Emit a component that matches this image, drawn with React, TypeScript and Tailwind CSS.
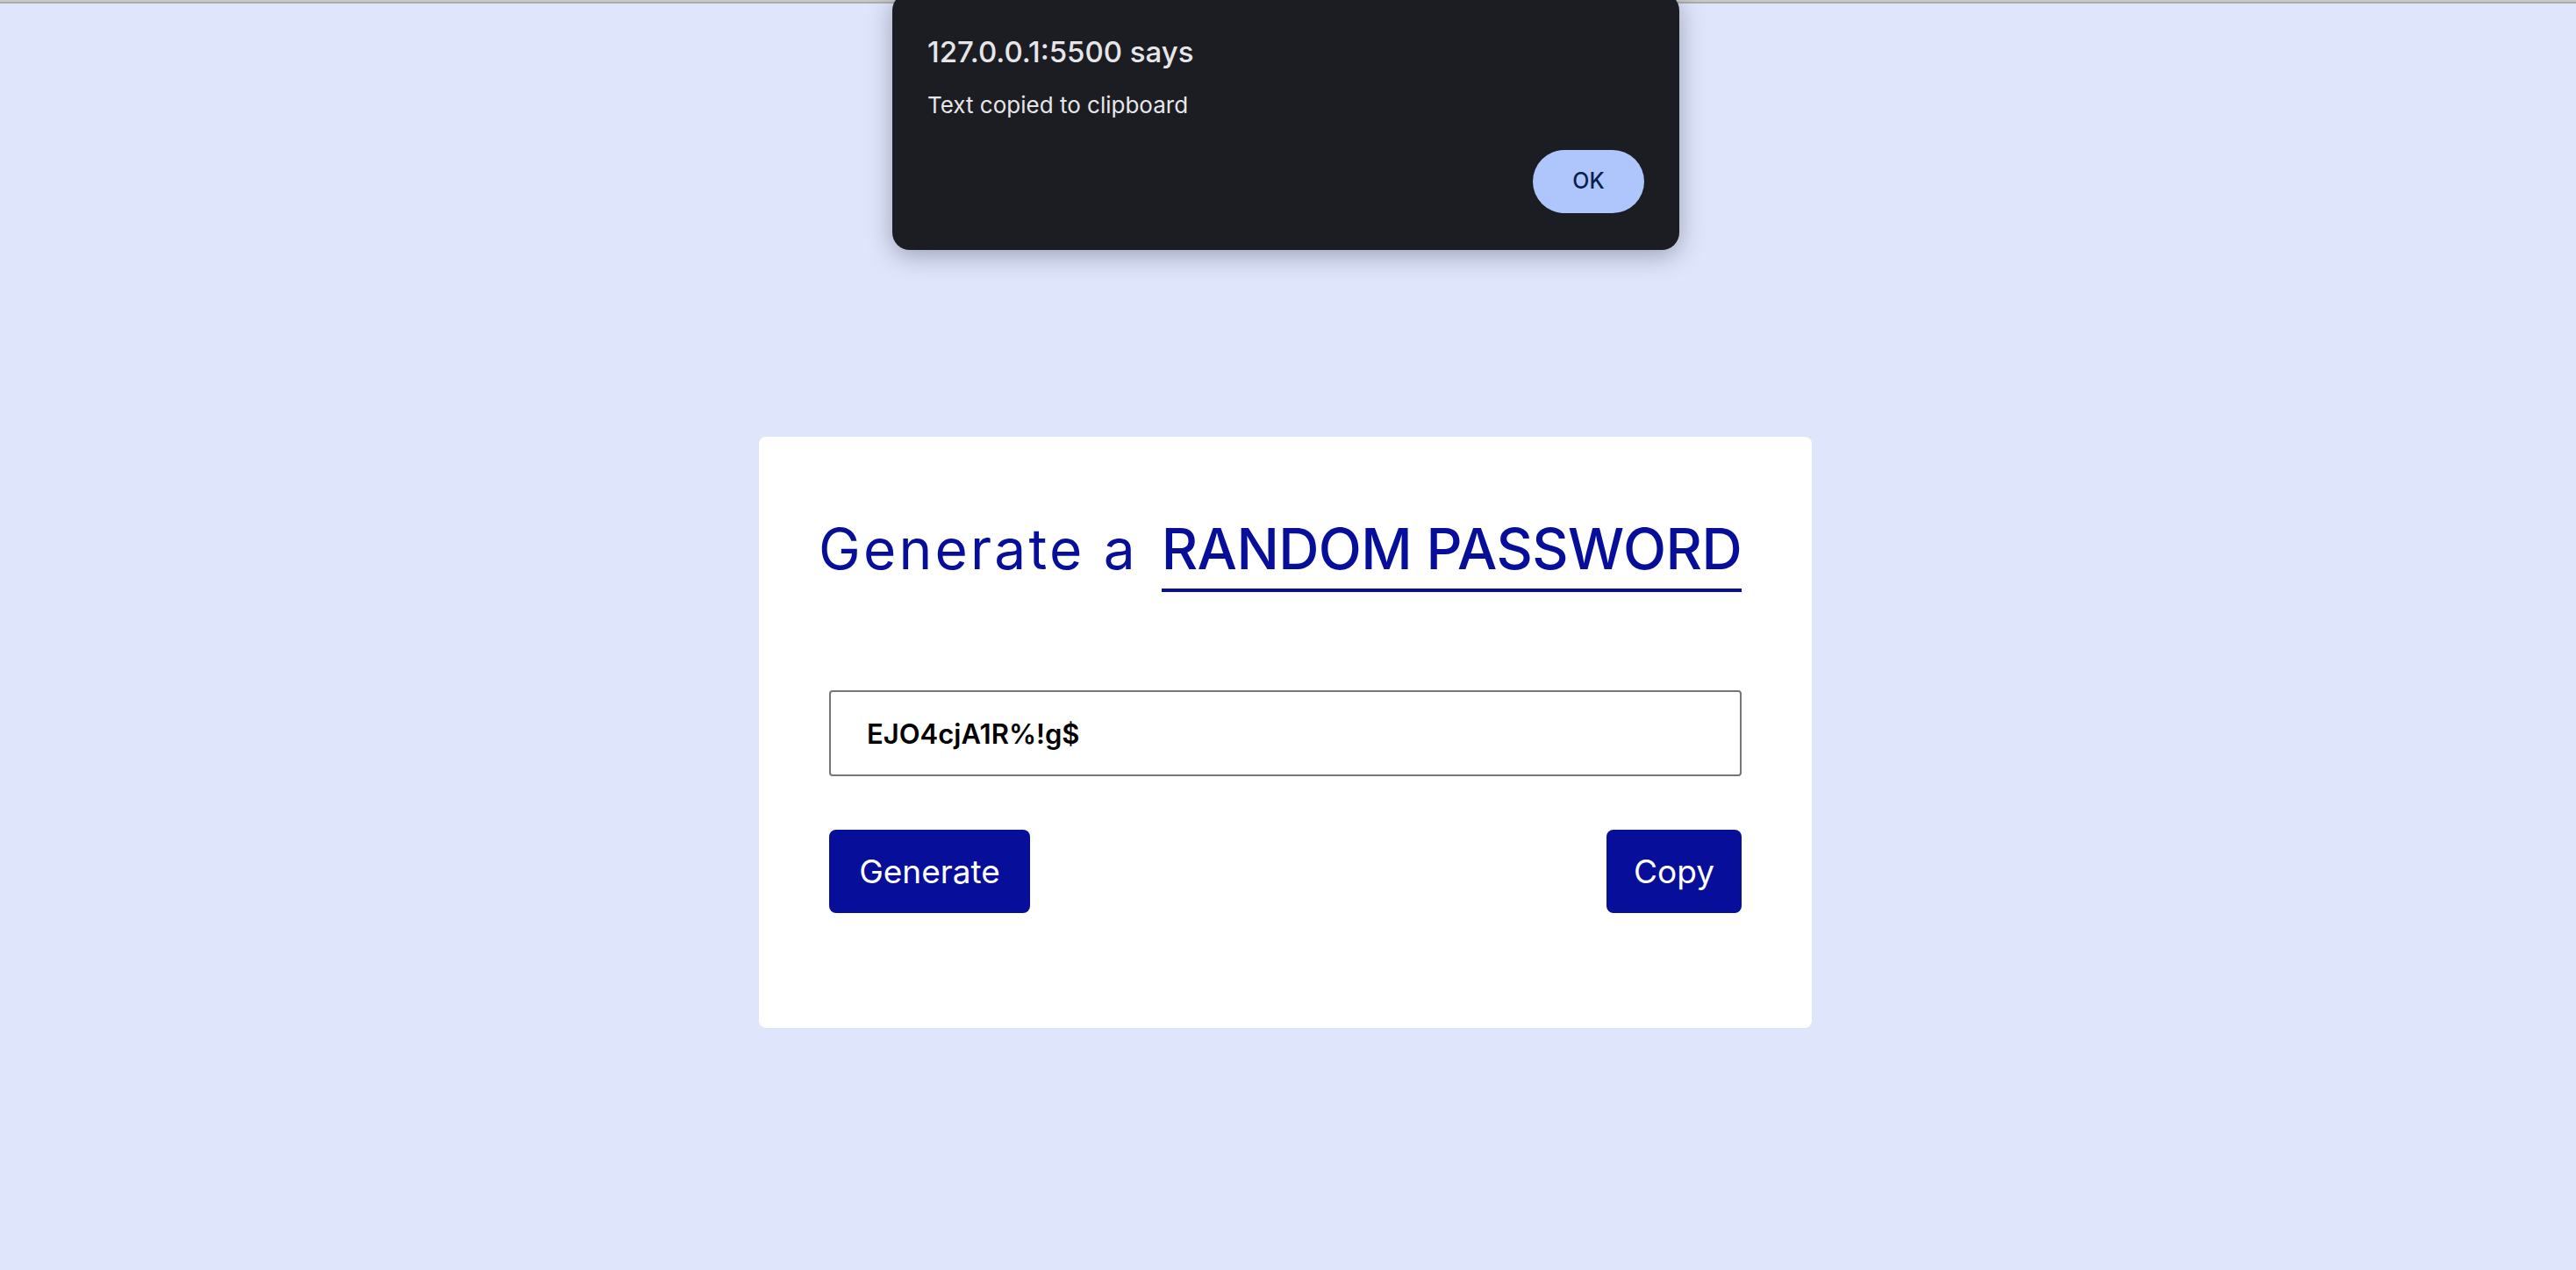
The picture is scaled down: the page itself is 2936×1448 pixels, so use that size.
import { useState } from "react";

const chars =
  "ABCDEFGHIJKLMNOPQRSTUVWXYZabcdefghijklmnopqrstuvwxyz0123456789!@#$%^&*";

function makePassword(len: number) {
  let out = "";
  for (let i = 0; i < len; i++) {
    out += chars[Math.floor(Math.random() * chars.length)];
  }
  return out;
}

function App() {
  const [password, setPassword] = useState("EJO4cjA1R%!g$");
  const [showAlert, setShowAlert] = useState(true);

  return (
    <div className="relative h-screen overflow-hidden bg-[#dfe5fa] font-['Inter','Noto_Sans',sans-serif]">
      <div className="h-[2px] bg-[#c9c9cb]" />
      <div className="h-[2px] bg-[#acacae]" />

      <div className="mt-[494px] ml-[865px] w-[1200px] rounded-[8px] bg-white px-[80px] pt-[96px] pb-[131px]">
        <h1 className="-ml-[12px] flex items-start justify-between text-[64px] leading-none text-[#060e9a]">
          <span className="font-normal tracking-[3.2px]">Generate a</span>
          <span className="border-b-4 border-[#060e9a] pb-[13px] font-medium tracking-[-0.6px]">
            RANDOM PASSWORD
          </span>
        </h1>

        <input
          type="text"
          value={password}
          readOnly
          className="mt-[112px] block h-[98px] w-full rounded-[4px] border-2 border-[#767676] px-[41px] text-[31px] font-semibold text-black outline-none"
        />

        <div className="mt-[61px] flex justify-between">
          <button
            className="flex h-[95px] w-[229px] items-center justify-center rounded-[8px] bg-[#060e9a] text-[37px] text-white"
            onClick={() => setPassword(makePassword(13))}
          >
            Generate
          </button>
          <button
            className="flex h-[95px] w-[154px] items-center justify-center rounded-[8px] bg-[#060e9a] text-[37px] text-white"
            onClick={() => setShowAlert(true)}
          >
            Copy
          </button>
        </div>
      </div>

      {showAlert && (
        <div className="absolute top-[-8px] left-[1017px] flex h-[293px] w-[897px] flex-col rounded-[20px] bg-[#1c1d22] px-[40px] pt-[51px] shadow-[0_6px_28px_rgba(30,35,60,0.35)]">
          <div className="text-[33px] leading-none font-medium text-[#e6e6ea]">
            127.0.0.1:5500 says
          </div>
          <div className="mt-[31px] text-[26px] leading-none text-[#e6e6ea]">
            Text copied to clipboard
          </div>
          <div className="mt-[38px] flex justify-end">
            <button
              className="h-[72px] w-[127px] rounded-full bg-[#aec6fb] text-[25px] font-medium text-[#0b1e50]"
              onClick={() => setShowAlert(false)}
            >
              OK
            </button>
          </div>
        </div>
      )}
    </div>
  );
}

export default App;
